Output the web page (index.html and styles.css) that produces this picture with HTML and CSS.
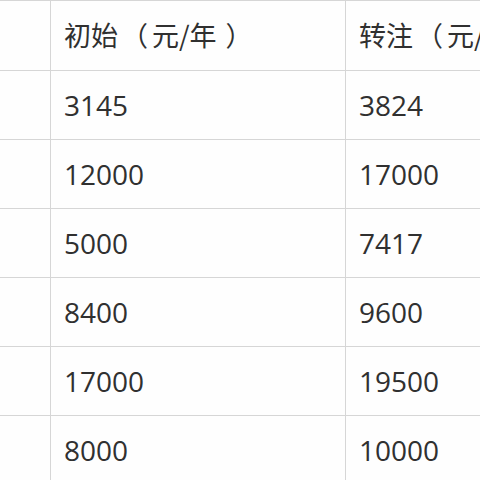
FILE: index.html
```html
<!DOCTYPE html>
<html lang="zh">
<head>
<meta charset="utf-8">
<link rel="stylesheet" href="styles.css">
</head>
<body>
<div class="table">
  <div class="cell"></div><div class="cell head">初始<span class="pl">（</span>元/年<span class="pr">）</span></div><div class="cell head">转注<span class="pl">（</span>元/年<span class="pr">）</span></div>
  <div class="cell"></div><div class="cell">3145</div><div class="cell">3824</div>
  <div class="cell"></div><div class="cell">12000</div><div class="cell">17000</div>
  <div class="cell"></div><div class="cell">5000</div><div class="cell">7417</div>
  <div class="cell"></div><div class="cell">8400</div><div class="cell">9600</div>
  <div class="cell"></div><div class="cell">17000</div><div class="cell">19500</div>
  <div class="cell"></div><div class="cell">8000</div><div class="cell">10000</div>
</div>
</body>
</html>
```
FILE: styles.css
```css
html, body {
  margin: 0;
  padding: 0;
  background: #fff;
  overflow: hidden;
}
.table {
  display: grid;
  grid-template-columns: 50px 294px 134px;
  grid-template-rows: 69px repeat(6, 68px);
  gap: 1px;
  padding-top: 1px;
  background: #d6d6d6;
  width: 480px;
  font-family: "Open Sans", "Noto Sans CJK SC", sans-serif;
  font-size: 28px;
  color: #303030;
}
.cell {
  background: #fefefe;
  display: flex;
  align-items: center;
  padding-left: 13px;
  white-space: nowrap;
  overflow: hidden;
}
.head {
  font-family: "Noto Sans CJK SC", sans-serif;
  font-size: 27px;
  padding-bottom: 3px;
}
.pl {
  margin-left: 3px;
  margin-right: 4px;
}
.pr {
  margin-left: 9px;
}
```
